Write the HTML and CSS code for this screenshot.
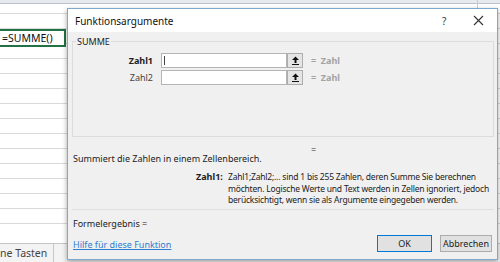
FILE: index.html
```html
<!DOCTYPE html>
<html lang="de">
<head>
  <meta charset="UTF-8" />
  <title>Funktionsargumente</title>
  <link rel="stylesheet" href="styles.css">
</head>
<body>
  <div class="sheet">
    <div class="colheads"><span class="colsep"></span></div>
    <div class="grid">
      <div class="cell">=SUMME()</div>
    </div>
    <div class="tabs">
      <span class="tab">ne Tasten</span>
      <span class="tabsep"></span>
    </div>

    <div class="dialog">
      <div class="titlebar">
        <span class="title">Funktionsargumente</span>
        <span class="help">?</span>
        <span class="close">
          <svg width="11" height="11" viewBox="0 0 11 11"><path d="M1 1 L10 10 M10 1 L1 10" stroke="#333" stroke-width="1.1" fill="none"/></svg>
        </span>
      </div>

      <div class="content">
        <fieldset class="group">
          <legend>SUMME</legend>
          <div class="args">
            <label class="arg-name">Zahl1</label>
            <div class="arg-input"><span class="caret"></span></div>
            <button class="ref-btn"><svg width="9" height="9" viewBox="0 0 9 9"><path d="M4.5 0.5 L8 4 L5.5 4 L5.5 7 L3.5 7 L3.5 4 L1 4 Z" fill="#111"/><path d="M1 8.5 H8" stroke="#111" stroke-width="1"/></svg></button>
            <span class="arg-val">=&nbsp;&nbsp;Zahl</span>

            <label class="arg-name light">Zahl2</label>
            <div class="arg-input"></div>
            <button class="ref-btn"><svg width="9" height="9" viewBox="0 0 9 9"><path d="M4.5 0.5 L8 4 L5.5 4 L5.5 7 L3.5 7 L3.5 4 L1 4 Z" fill="#111"/><path d="M1 8.5 H8" stroke="#111" stroke-width="1"/></svg></button>
            <span class="arg-val">=&nbsp;&nbsp;Zahl</span>
          </div>
        </fieldset>

        <div class="result-eq">=</div>
        <p class="summary">Summiert die Zahlen in einem Zellenbereich.</p>
        <div class="desc">
          <span class="desc-name">Zahl1:</span>
          <span class="desc-text">Zahl1;Zahl2;... sind 1 bis 255 Zahlen, deren Summe Sie berechnen<br>möchten. Logische Werte und Text werden in Zellen ignoriert, jedoch<br>berücksichtigt, wenn sie als Argumente eingegeben werden.</span>
        </div>

        <div class="formula">Formelergebnis =</div>

        <div class="footer">
          <a class="help-link" href="#">Hilfe für diese Funktion</a>
          <button class="btn btn-default">OK</button>
          <button class="btn">Abbrechen</button>
        </div>
      </div>
    </div>
  </div>
</body>
</html>
```

FILE: styles.css
```css
body {
  margin: 0;
  font-family: 'Noto Sans', 'Open Sans', sans-serif;
  color: #222;
  background: #fff;
}
.sheet {
  position: relative;
  width: 500px;
  height: 262px;
  overflow: hidden;
  display: flex;
  flex-direction: column;
}
.colheads {
  height: 3px;
  background: #e6e9ed;
  border-bottom: 1px solid #b9c2cc;
  position: relative;
}
.colsep {
  position: absolute;
  left: 477px;
  top: 0;
  width: 1px;
  height: 8px;
  background: #c8cdd3;
}
.grid {
  flex: 1;
  background: repeating-linear-gradient(to bottom, #fff 0, #fff 14px, #dadada 14px, #dadada 15px);
  background-position: 0 -5px;
  padding-top: 25px;
}
.cell {
  width: 62px;
  height: 14px;
  border: 2px solid #217346;
  border-left: none;
  background: #fff;
  font-size: 10.5px;
  line-height: 14px;
  padding-left: 2px;
  color: #111;
}
.tabs {
  height: 18px;
  background: #f3f3f3;
  border-top: 1px solid #c6c6c6;
  display: flex;
  align-items: center;
  font-size: 10.5px;
  color: #444;
}
.tab {
  width: 53px;
  border-right: 1px solid #c6c6c6;
  line-height: 18px;
  white-space: nowrap;
}

/* dialog window */
.dialog {
  position: absolute;
  left: 67px;
  top: 8px;
  width: 429px;
  height: 250px;
  border: 1px solid #7fa8cf;
  background: #f0f0f0;
  box-shadow: 0 2px 5px rgba(0, 0, 0, 0.35);
  display: flex;
  flex-direction: column;
}
.titlebar {
  height: 23px;
  background: #fff;
  display: flex;
  align-items: center;
  padding-left: 7px;
}
.title {
  font-size: 10px;
  color: #111;
  flex: 1;
}
.help {
  font-size: 10px;
  color: #333;
  width: 31px;
}
.close {
  width: 14px;
  margin-right: 10px;
  display: flex;
}
.content {
  flex: 1;
  padding: 0 5px 0 4px;
  display: flex;
  flex-direction: column;
  font-size: 9px;
}
.group {
  margin: 3px -2px 0 0;
  padding: 5px 0 0;
  height: 95px;
  border: 1px solid #dcdcdc;
}
.group legend {
  padding: 0 1px;
  margin-left: 3px;
  font-size: 9px;
  color: #222;
}
.args {
  display: grid;
  grid-template-columns: 88px 126px 16px auto;
  grid-auto-rows: 15px;
  row-gap: 2px;
  align-items: center;
}
.arg-name {
  font-weight: bold;
  text-align: right;
  padding-right: 8px;
  color: #222;
}
.arg-name.light {
  font-weight: normal;
  color: #444;
}
.arg-input {
  height: 13px;
  width: 124px;
  background: #fff;
  border: 1px solid #b5b5b5;
  display: flex;
  align-items: center;
}
.caret {
  width: 1px;
  height: 9px;
  background: #444;
  margin-left: 2px;
}
.ref-btn {
  width: 16px;
  height: 15px;
  padding: 0;
  border: 1px solid #adadad;
  background: #e5e5e5;
  display: flex;
  align-items: center;
  justify-content: center;
}
.arg-val {
  padding-left: 8px;
  color: #a3a3a3;
  font-weight: bold;
}
.result-eq {
  text-align: center;
  margin: 8px 0 0;
  padding-left: 63px;
  height: 10px;
  line-height: 10px;
  color: #333;
}
.summary {
  margin: -2px 0 0 1px;
  line-height: 12px;
}
.desc {
  display: flex;
  margin: 6px -2px 0 0;
  padding-left: 124px;
  line-height: 11.5px;
  height: 38px;
  border-bottom: 1px solid #e0e0e0;
  white-space: nowrap;
}
.desc-name {
  font-weight: bold;
  width: 32px;
  flex: none;
}
.desc-text {
  color: #222;
  font-size: 8.5px;
  letter-spacing: -0.2px;
}
.formula {
  margin: 8px 0 0 1px;
  line-height: 12px;
}
.footer {
  display: flex;
  align-items: center;
  margin-top: 5px;
  gap: 8px;
}
.help-link {
  flex: 1;
  color: #2f7ed0;
  padding-left: 1px;
  margin-top: 2px;
}
.btn {
  height: 17px;
  padding: 0;
  font-family: inherit;
  font-size: 9px;
  color: #222;
  background: #e1e1e1;
  border: 1px solid #adadad;
  width: 52px;
}
.btn-default {
  width: 55px;
  border-color: #0078d7;
}
```
